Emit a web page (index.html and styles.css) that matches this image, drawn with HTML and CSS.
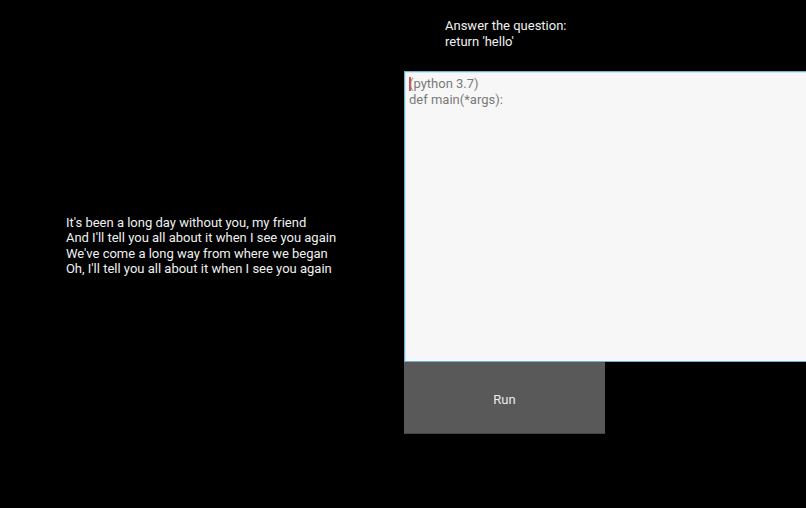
FILE: index.html
```html
<!DOCTYPE html>
<html>
<head>
<meta charset="utf-8">
<link rel="stylesheet" href="styles.css">
</head>
<body>
<div class="app">
  <div class="left">
    <div class="lyrics">
      <div>It's been a long day without you, my friend</div>
      <div>And I'll tell you all about it when I see you again</div>
      <div>We've come a long way from where we began</div>
      <div>Oh, I'll tell you all about it when I see you again</div>
    </div>
  </div>
  <div class="right">
    <div class="question">
      <div>Answer the question:</div>
      <div>return 'hello'</div>
    </div>
    <div class="editor">
      <div class="line"><span class="cursor"></span>(python 3.7)</div>
      <div class="line">def main(*args):</div>
    </div>
    <div class="run">Run</div>
  </div>
</div>
</body>
</html>
```
FILE: styles.css
```css
html, body {
  margin: 0;
  padding: 0;
  background: #000;
  width: 806px;
  height: 508px;
  overflow: hidden;
}
.app {
  display: flex;
  width: 806px;
  height: 508px;
  font-family: Roboto, "Liberation Sans", sans-serif;
  font-size: 13px;
}
.left {
  width: 404px;
  flex: none;
  display: flex;
  justify-content: center;
  align-items: flex-start;
  padding: 215px 2px 0 0;
  box-sizing: border-box;
}
.lyrics {
  color: #f0f0f0;
  line-height: 15.3px;
}
.right {
  flex: 1;
  display: flex;
  flex-direction: column;
}
.question {
  height: 71px;
  box-sizing: border-box;
  padding: 18px 0 0 41px;
  color: #f0f0f0;
  line-height: 16px;
}
.editor {
  height: 291px;
  box-sizing: border-box;
  background: #f7f7f7;
  border: 1px solid #6fb3d2;
  border-right: none;
  box-shadow: inset 0 1px 0 #cfe8f3, inset 1px 0 0 #cfe8f3;
  padding: 4px 0 0 4px;
  color: #7a7a7a;
  line-height: 16px;
}
.line {
  position: relative;
}
.cursor {
  position: absolute;
  left: 0;
  top: 1px;
  width: 2px;
  height: 14px;
  background: #d9534f;
}
.run {
  width: 201px;
  height: 72px;
  box-sizing: border-box;
  padding-top: 2px;
  background: #595959;
  color: #ececec;
  display: flex;
  align-items: center;
  justify-content: center;
  box-shadow: inset 0 -1px 0 #444;
}
```
